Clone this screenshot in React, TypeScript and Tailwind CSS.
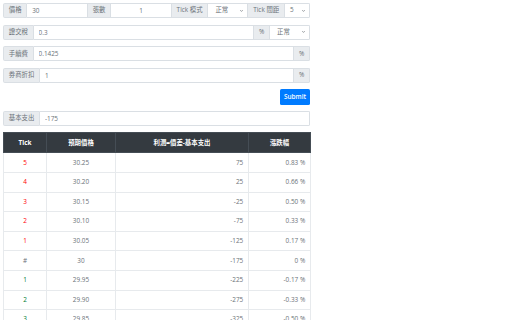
import React from 'react';

const font = "font-['Open_Sans','Noto_Sans_CJK_TC',sans-serif]";
const addon = 'flex items-center px-[4.8px] bg-[#e9ecef] border border-[#dadfe4] text-[#6b7278] whitespace-nowrap';
const field = 'h-full min-w-0 flex-1 border border-[#dadfe4] bg-white px-[4.8px] text-[6.4px] text-[#6b7278] outline-none';

function Chevron() {
  return (
    <svg width="5" height="4" viewBox="0 0 4 5" className="shrink-0">
      <path d="M0.5 1.5L2 3L3.5 1.5" fill="none" stroke="#555b61" strokeWidth="0.8" />
    </svg>
  );
}

function FakeSelect({ value, className }: { value: string; className: string }) {
  return (
    <div className={`flex h-full items-center justify-between border border-l-0 border-[#dadfe4] bg-white pr-[3px] text-[#6b7278] ${className}`}>
      <span>{value}</span>
      <Chevron />
    </div>
  );
}

const rows = [
  { tick: '5', tone: 'text-[#ff0000]', price: '30.25', profit: '75', pct: '0.83 %' },
  { tick: '4', tone: 'text-[#ff0000]', price: '30.20', profit: '25', pct: '0.66 %' },
  { tick: '3', tone: 'text-[#ff0000]', price: '30.15', profit: '-25', pct: '0.50 %' },
  { tick: '2', tone: 'text-[#ff0000]', price: '30.10', profit: '-75', pct: '0.33 %' },
  { tick: '1', tone: 'text-[#ff0000]', price: '30.05', profit: '-125', pct: '0.17 %' },
  { tick: '#', tone: 'text-[#6b7278]', price: '30', profit: '-175', pct: '0 %' },
  { tick: '1', tone: 'text-[#007a33]', price: '29.95', profit: '-225', pct: '-0.17 %' },
  { tick: '2', tone: 'text-[#007a33]', price: '29.90', profit: '-275', pct: '-0.33 %' },
  { tick: '3', tone: 'text-[#007a33]', price: '29.85', profit: '-325', pct: '-0.50 %' },
  { tick: '4', tone: 'text-[#007a33]', price: '29.80', profit: '-375', pct: '-0.66 %' },
  { tick: '5', tone: 'text-[#007a33]', price: '29.75', profit: '-425', pct: '-0.83 %' },
];

export default function App() {
  return (
    <div className={`${font} min-h-[320px] bg-white pl-[3px] pt-[3px] text-[6.4px] leading-none text-[#6b7278]`}>
      <div className="w-[307px]">
        <div className="mb-[6.4px] flex h-[15.2px]">
          <span className={`${addon} rounded-l-[1.6px]`}>價格</span>
          <input readOnly value="30" className={`${field} border-l-0`} />
          <span className={`${addon} border-l-0`}>張數</span>
          <input readOnly value="1" className={`${field} border-l-0 text-center`} />
          <span className={`${addon} border-l-0`}>Tick 模式</span>
          <FakeSelect value="正常" className="w-[40px] pl-[7px]" />
          <span className={`${addon} border-l-0`}>Tick 間距</span>
          <FakeSelect value="5" className="w-[25px] rounded-r-[1.6px] pl-[5px]" />
        </div>

        <div className="mb-[6.4px] flex h-[15.2px]">
          <span className={`${addon} rounded-l-[1.6px]`}>證交稅</span>
          <input readOnly value="0.3" className={`${field} border-l-0`} />
          <span className={`${addon} border-l-0`}>%</span>
          <FakeSelect value="正常" className="w-[40px] rounded-r-[1.6px] pl-[7px]" />
        </div>

        <div className="mb-[6.4px] flex h-[15.2px]">
          <span className={`${addon} rounded-l-[1.6px]`}>手續費</span>
          <input readOnly value="0.1425" className={`${field} border-l-0`} />
          <span className={`${addon} rounded-r-[1.6px] border-l-0`}>%</span>
        </div>

        <div className="mb-[6.4px] flex h-[15.2px]">
          <span className={`${addon} rounded-l-[1.6px]`}>券商折扣</span>
          <input readOnly value="1" className={`${field} border-l-0`} />
          <span className={`${addon} rounded-r-[1.6px] border-l-0`}>%</span>
        </div>

        <div className="mb-[6.4px] flex justify-end">
          <button className="h-[15.2px] w-[30px] rounded-[1.6px] bg-[#007bff] font-semibold text-white">Submit</button>
        </div>

        <div className="mb-[6.4px] flex h-[15.2px]">
          <span className={`${addon} rounded-l-[1.6px]`}>基本支出</span>
          <input readOnly value="-175" className={`${field} rounded-r-[1.6px] border-l-0`} />
        </div>

        <table className="w-full table-fixed border-collapse">
          <colgroup>
            <col className="w-[43px]" />
            <col className="w-[69px]" />
            <col className="w-[133px]" />
            <col className="w-[62px]" />
          </colgroup>
          <thead>
            <tr className="h-[20px] bg-[#343a40] text-white">
              <th className="border border-[#454d55] font-bold">Tick</th>
              <th className="border border-[#454d55] font-bold">預期價格</th>
              <th className="border border-[#454d55] font-bold">利潤=價差-基本支出</th>
              <th className="border border-[#454d55] font-bold">漲跌幅</th>
            </tr>
          </thead>
          <tbody>
            {rows.map((row, i) => (
              <tr key={i} className="h-[19.6px]">
                <td className={`border border-[#e7eaed] text-center ${row.tone}`}>{row.tick}</td>
                <td className="border border-[#e7eaed] text-center">{row.price}</td>
                <td className="border border-[#e7eaed] px-[4.8px] text-right">{row.profit}</td>
                <td className="border border-[#e7eaed] px-[4.8px] text-right">{row.pct}</td>
              </tr>
            ))}
          </tbody>
        </table>
      </div>
    </div>
  );
}
